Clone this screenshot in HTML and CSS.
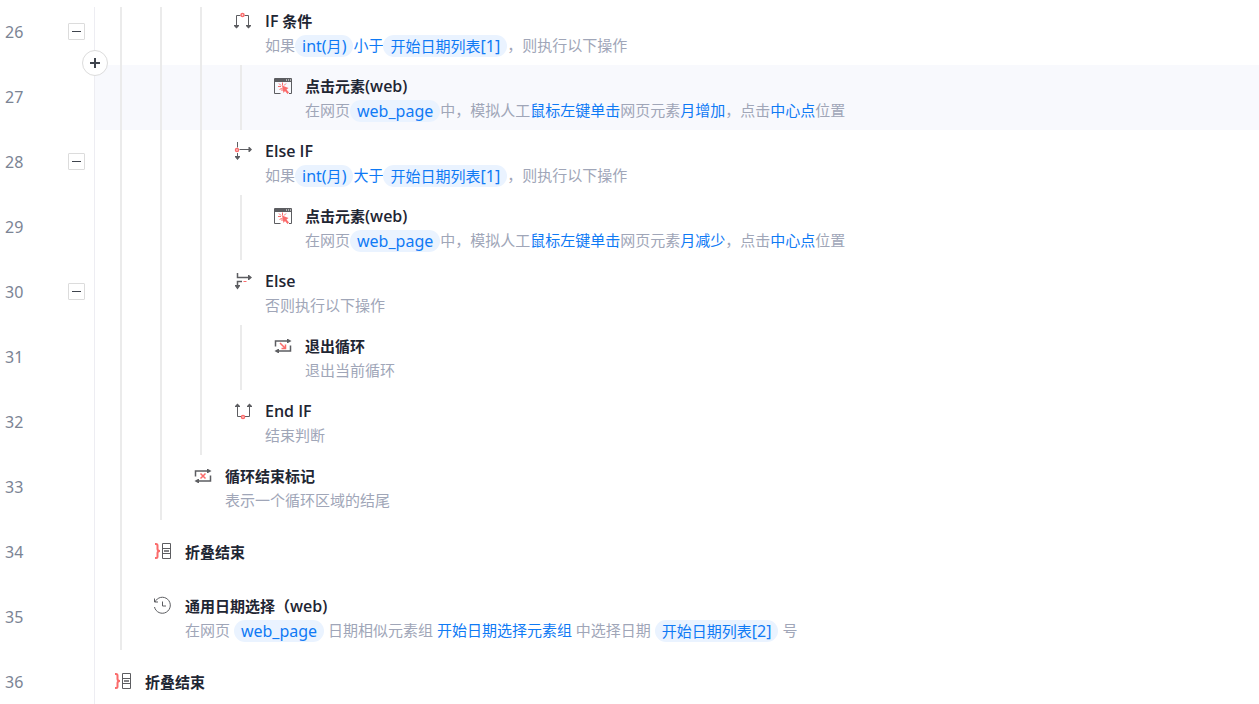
FILE: index.html
```html
<!DOCTYPE html>
<html lang="zh-CN">
<head>
<meta charset="utf-8">
<title>流程编辑</title>
<link rel="stylesheet" href="styles.css">
</head>
<body>
<svg class="sprite" aria-hidden="true">
  <symbol id="i-if" viewBox="0 0 20 20">
    <path class="ink" d="M7.5 4.5H3.5V16M11.5 4.5H15.5V16"/>
    <path class="ink-fill" d="M1 14h5v1L3.500 17.500 1 15zM13 14h5v1l-2.500 2.500-2.500-2.500z"/>
    <circle class="red bold" cx="9.500" cy="4" r="1.500"/>
  </symbol>
  <symbol id="i-endif" viewBox="0 0 20 20">
    <path class="ink" d="M8 15.500H4.500V4M12 15.500h4.500V4"/>
    <path class="ink-fill" d="M2 6V5l2.500-2.500L7 5v1zM14 6V5l2.500-2.500L19 5v1z"/>
    <circle class="red bold" cx="10" cy="16" r="1.500"/>
  </symbol>
  <symbol id="i-elseif" viewBox="0 0 20 20">
    <path class="ink" d="M4.500 1v5.500M4.500 12v5M6.500 8.500H17"/>
    <path class="ink-fill" d="M2 15h5v1l-2.500 3L2 16zM15.500 6h1l2.500 2.500-2.500 2.500h-1z"/>
    <circle class="red bold" cx="4" cy="9" r="1.500"/>
  </symbol>
  <symbol id="i-else" viewBox="0 0 20 20">
    <path class="ink bold" d="M4.500 2v4.500H16M9 10.500H4.500V16"/>
    <path class="ink-fill" d="M2 14h5v1l-2.500 3.500L2 15zM15 4h1l3 2.500L16 9h-1z"/>
    <path class="red" d="M10.500 10.500h3"/>
  </symbol>
  <symbol id="i-click" viewBox="0 0 20 20">
    <path class="ink" d="M1.500 5v12.500H7.500M18.500 5v12.500H16"/>
    <path class="ink-fill" d="M1 3q0-1 1-1h16q1 0 1 1v3H1z"/>
    <path class="hole" d="M13 4h1M15 4h1M17 4h1"/>
    <path class="red" d="M9.500 6.500v3M5 10.500h3M6 7.500l2 2M6.500 14l2-2M13 7.500l-2 2M9 12v3"/>
    <path class="red-fill" d="M9 9.500l6.500 2.500-2 1.500 2.500 3-1.500 1.500-2.500-3-1.500 2z"/>
  </symbol>
  <symbol id="i-exit" viewBox="0 0 20 20">
    <path class="ink bold" d="M2.500 10.500V5H16M17.500 9.500V15H4"/>
    <path class="ink-fill" d="M14 3h1l3.500 2L15 7h-1zM6 13H5l-3.500 2L5 17h1z"/>
    <path class="red bold" d="M7 7l5 5M12.500 8.500v4h-4"/>
  </symbol>
  <symbol id="i-loopend" viewBox="0 0 20 20">
    <path class="ink bold" d="M2.500 10.500V5H16M17.500 9.500V15H4"/>
    <path class="ink-fill" d="M14 3h1l3.500 2L15 7h-1zM6 13H5l-3.500 2L5 17h1z"/>
    <path class="red bold" d="M7.500 7.500l5 5M12.500 7.500l-5 5"/>
  </symbol>
  <symbol id="i-fold" viewBox="0 0 20 20">
    <path class="red brace" d="M2 3h1q1.500 0 1.500 1.500V8q0 2 2.500 2-2.500 0-2.500 2v3.500Q4.500 17 3 17H2"/>
    <path class="ink" d="M9.500 2.500h8v15h-8zM9.500 7.500h8M9.500 12.500h8"/>
    <path class="ink bold" d="M11 10h5"/>
  </symbol>
  <symbol id="i-history" viewBox="0 0 20 20">
    <path class="ink" d="M1.500 2.500v3.500h3.500M2 6A8 8 0 1 1 1.500 11M9.500 5.500v4.500h3.500"/>
  </symbol>
</svg>

<main class="viewport">
  <button class="add" type="button" aria-label="添加指令"><svg viewBox="0 0 12 12" aria-hidden="true"><path d="M6 1v10M1 6h10"/></svg></button>
  <ol class="steps">
    <li class="row">
      <div class="gutter"><span class="num">26</span><button class="fold" type="button" aria-label="折叠"></button></div>
      <div class="body"><i class="guide"></i><i class="guide"></i><i class="guide"></i>
        <svg class="icon"><use href="#i-if"/></svg>
        <div class="text"><h3 class="title"><span class="lat">IF</span> 条件</h3>
          <p class="desc">如果<a class="chip" href="#"><span class="lat">int(</span>月<span class="lat">)</span></a><a href="#">小于</a><a class="chip" href="#">开始日期列表<span class="lat">[1]</span></a>，则执行以下操作</p></div>
      </div>
    </li>
    <li class="row row-active">
      <div class="gutter"><span class="num">27</span></div>
      <div class="body"><i class="guide"></i><i class="guide"></i><i class="guide"></i><i class="guide"></i>
        <svg class="icon"><use href="#i-click"/></svg>
        <div class="text"><h3 class="title">点击元素<span class="lat">(web)</span></h3>
          <p class="desc">在网页<a class="chip" href="#"><span class="lat">web_page</span></a>中，模拟人工<a href="#">鼠标左键单击</a>网页元素<a href="#">月增加</a>，点击<a href="#">中心点</a>位置</p></div>
      </div>
    </li>
    <li class="row">
      <div class="gutter"><span class="num">28</span><button class="fold" type="button" aria-label="折叠"></button></div>
      <div class="body"><i class="guide"></i><i class="guide"></i><i class="guide"></i>
        <svg class="icon"><use href="#i-elseif"/></svg>
        <div class="text"><h3 class="title"><span class="lat">Else IF</span></h3>
          <p class="desc">如果<a class="chip" href="#"><span class="lat">int(</span>月<span class="lat">)</span></a><a href="#">大于</a><a class="chip" href="#">开始日期列表<span class="lat">[1]</span></a>，则执行以下操作</p></div>
      </div>
    </li>
    <li class="row">
      <div class="gutter"><span class="num">29</span></div>
      <div class="body"><i class="guide"></i><i class="guide"></i><i class="guide"></i><i class="guide"></i>
        <svg class="icon"><use href="#i-click"/></svg>
        <div class="text"><h3 class="title">点击元素<span class="lat">(web)</span></h3>
          <p class="desc">在网页<a class="chip" href="#"><span class="lat">web_page</span></a>中，模拟人工<a href="#">鼠标左键单击</a>网页元素<a href="#">月减少</a>，点击<a href="#">中心点</a>位置</p></div>
      </div>
    </li>
    <li class="row">
      <div class="gutter"><span class="num">30</span><button class="fold" type="button" aria-label="折叠"></button></div>
      <div class="body"><i class="guide"></i><i class="guide"></i><i class="guide"></i>
        <svg class="icon"><use href="#i-else"/></svg>
        <div class="text"><h3 class="title"><span class="lat">Else</span></h3>
          <p class="desc">否则执行以下操作</p></div>
      </div>
    </li>
    <li class="row">
      <div class="gutter"><span class="num">31</span></div>
      <div class="body"><i class="guide"></i><i class="guide"></i><i class="guide"></i><i class="guide"></i>
        <svg class="icon"><use href="#i-exit"/></svg>
        <div class="text"><h3 class="title">退出循环</h3>
          <p class="desc">退出当前循环</p></div>
      </div>
    </li>
    <li class="row">
      <div class="gutter"><span class="num">32</span></div>
      <div class="body"><i class="guide"></i><i class="guide"></i><i class="guide"></i>
        <svg class="icon"><use href="#i-endif"/></svg>
        <div class="text"><h3 class="title"><span class="lat">End IF</span></h3>
          <p class="desc">结束判断</p></div>
      </div>
    </li>
    <li class="row">
      <div class="gutter"><span class="num">33</span></div>
      <div class="body"><i class="guide"></i><i class="guide"></i>
        <svg class="icon"><use href="#i-loopend"/></svg>
        <div class="text"><h3 class="title">循环结束标记</h3>
          <p class="desc">表示一个循环区域的结尾</p></div>
      </div>
    </li>
    <li class="row row-single">
      <div class="gutter"><span class="num">34</span></div>
      <div class="body"><i class="guide"></i>
        <svg class="icon"><use href="#i-fold"/></svg>
        <div class="text"><h3 class="title">折叠结束</h3></div>
      </div>
    </li>
    <li class="row">
      <div class="gutter"><span class="num">35</span></div>
      <div class="body"><i class="guide"></i>
        <svg class="icon"><use href="#i-history"/></svg>
        <div class="text"><h3 class="title">通用日期选择（<span class="lat">web)</span></h3>
          <p class="desc">在网页 <a class="chip" href="#"><span class="lat">web_page</span></a> 日期相似元素组 <a href="#">开始日期选择元素组</a> 中选择日期 <a class="chip" href="#">开始日期列表<span class="lat">[2]</span></a> 号</p></div>
      </div>
    </li>
    <li class="row row-single">
      <div class="gutter"><span class="num">36</span></div>
      <div class="body">
        <svg class="icon"><use href="#i-fold"/></svg>
        <div class="text"><h3 class="title">折叠结束</h3></div>
      </div>
    </li>
  </ol>
</main>
</body>
</html>
```
FILE: styles.css
```css
* { box-sizing: border-box; }

body {
  margin: 0;
  background: #fff;
  font-family: "Noto Sans", "Noto Sans CJK SC", sans-serif;
  font-size: 15px;
  line-height: 24px;
}

.sprite { position: absolute; width: 0; height: 0; }

.viewport {
  position: relative;
  height: calc(100vh - 7px);
  margin-top: 7px;
  overflow: hidden;
}

.steps {
  margin: -7px 0 0;
  padding: 0;
  list-style: none;
}

.row {
  display: flex;
  height: 65px;
}

.gutter {
  flex: none;
  display: flex;
  justify-content: space-between;
  width: 94px;
  padding: 20px 9px 0 5px;
}

.num { color: #7b8494; font-size: 16px; }

.fold {
  display: grid;
  place-items: center;
  width: 17px;
  height: 17px;
  margin-top: 3px;
  padding: 0;
  border: 1px solid #dcdcdc;
  border-radius: 1px;
  background: #fff;
}

.fold::before {
  content: "";
  width: 9px;
  height: 1px;
  background: #3f444d;
}

.body {
  flex: 1;
  display: flex;
  border-left: 1px solid #ededf2;
}

.row-active .body { background: #f8f9fd; }

.guide {
  flex: none;
  width: 40px;
  padding-left: 25px;
}

.guide::before {
  content: "";
  display: block;
  width: 2px;
  height: 100%;
  background: #ebebeb;
}

.icon {
  flex: none;
  width: 20px;
  height: 20px;
  margin: 11px 12px 0 18px;
}

.text { padding-top: 9px; white-space: nowrap; }

.row-single .icon { margin-top: 21px; }
.row-single .text { padding-top: 20px; }

.title, .desc { height: 24px; margin: 0; }
.title { color: #1f2633; font-size: 15px; font-weight: 700; }
.desc { color: #a0a6b8; }
.lat { font-size: 16px; line-height: 20px; }
.title .lat { font-family: "Open Sans", "Noto Sans", sans-serif; font-weight: 650; }

a { color: #0f7af5; text-decoration: none; }

.chip {
  display: inline-block;
  height: 22px;
  padding: 0 7px;
  border-radius: 11px;
  background: #eaf3ff;
  line-height: 22px;
  vertical-align: bottom;
}

.add {
  position: absolute;
  top: 43px;
  left: 82px;
  display: grid;
  place-items: center;
  width: 26px;
  height: 26px;
  padding: 0;
  border: 1px solid #dcdcdc;
  border-radius: 50%;
  background: #fff;
}

.add svg { width: 12px; height: 12px; stroke: #3f444d; stroke-width: 2; }

.ink { fill: none; stroke: #5c5d61; stroke-width: 1; }
.ink-fill { fill: #5c5d61; }
.red { fill: none; stroke: #fa6b6b; stroke-width: 1; }
.bold { stroke-width: 1.5; }
.brace { stroke-width: 2; }
.red-fill { fill: #fa6b6b; }
.hole { stroke: #fff; stroke-width: 1; }
```
